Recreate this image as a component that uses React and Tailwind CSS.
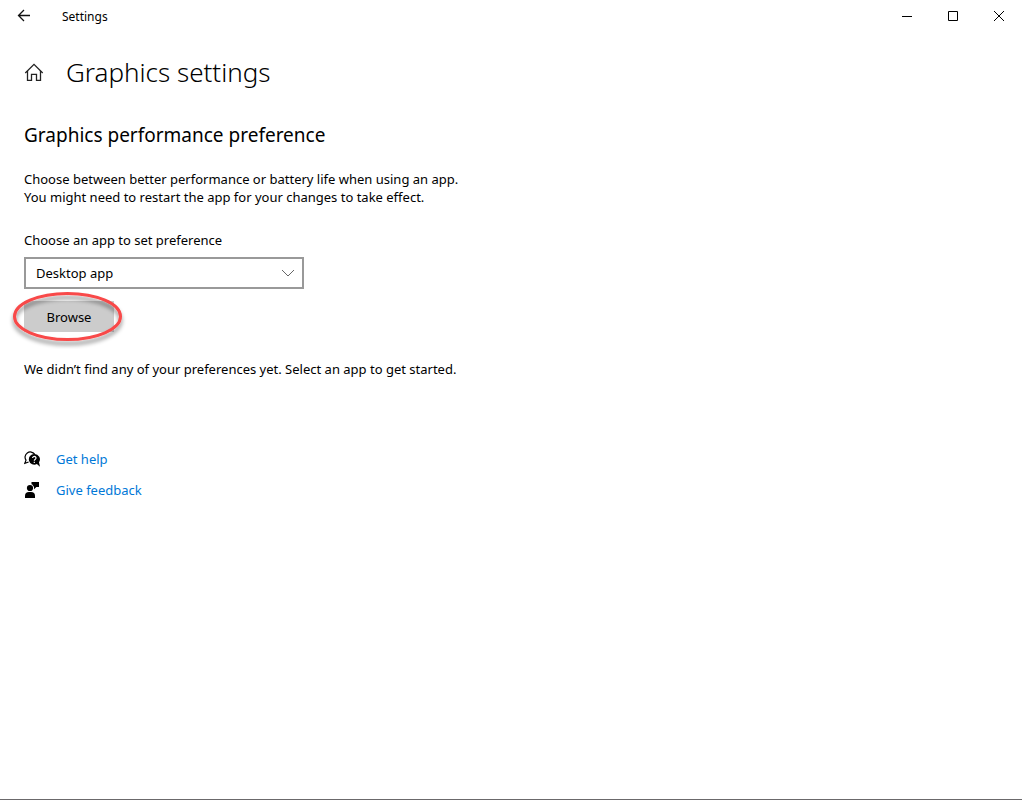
import React from 'react';

const BackIcon = () => (
  <svg className="w-4 h-4" viewBox="0 0 16 16" fill="none" stroke="#111" strokeWidth="1.3">
    <path d="M14 7.5H2.5M8 2L2.5 7.5L8 13" />
  </svg>
);

const HomeIcon = () => (
  <svg className="w-5 h-5 shrink-0" viewBox="0 0 20 20" fill="none" stroke="#222" strokeWidth="1.3">
    <path d="M1.3 11L10 2.3L18.7 11" />
    <path d="M3.5 9V18.4H7.5V12.4H12.5V18.4H16.5V9" />
  </svg>
);

const HelpIcon = () => (
  <svg className="w-4 h-4 shrink-0" viewBox="0 0 16 16" fill="none">
    <path
      d="M4.6 11L.8 12.4L2 9.2A4.9 4.9 0 1 1 10.6 3.2"
      stroke="#000"
      strokeWidth="1.2"
    />
    <path d="M10.3 2.9a5.4 5.4 0 1 0 2.6 10.1l3.1 2.7l-1-4.4a5.4 5.4 0 0 0-4.7-8.4z" fill="#000" />
    <path d="M8.6 7a1.7 1.5 0 1 1 2.7 1.2c-.7.5-1 .7-1 1.5" stroke="#fff" strokeWidth="1.2" />
    <path d="M9.7 10.7h1.2v1.2H9.7z" fill="#fff" />
  </svg>
);

const FeedbackIcon = () => (
  <svg className="w-4 h-4 shrink-0" viewBox="0 0 16 16" fill="#000">
    <circle cx="6" cy="6" r="3.1" />
    <path d="M1 16v-2a4 4 0 0 1 4-4h2a4 4 0 0 1 4 4v2z" />
    <path d="M7.5 0H15v5h-2.6L10 7.3V5L8.3 2.6L7.5 2.2z" />
  </svg>
);

const TitleBar = () => (
  <header className="flex h-8 items-center justify-between">
    <div className="flex items-center">
      <button aria-label="Back" className="flex h-8 w-12 items-center justify-center">
        <BackIcon />
      </button>
      <span className="ml-3.5 pt-px text-[12px] leading-4">Settings</span>
    </div>
    <div className="flex">
      <button aria-label="Minimize" className="flex h-8 w-[46px] items-center justify-center">
        <svg className="w-2.5 h-2.5" viewBox="0 0 10 10" fill="none" stroke="#000">
          <path d="M0 5.5H10" />
        </svg>
      </button>
      <button aria-label="Maximize" className="flex h-8 w-[46px] items-center justify-center">
        <svg className="w-2.5 h-2.5" viewBox="0 0 10 10" fill="none" stroke="#000">
          <path d="M.5 .5H9.5V9.5H.5z" />
        </svg>
      </button>
      <button aria-label="Close" className="flex h-8 w-[46px] items-center justify-center">
        <svg className="w-2.5 h-2.5" viewBox="0 0 10 10" fill="none" stroke="#000">
          <path d="M0 0L10 10M10 0L0 10" />
        </svg>
      </button>
    </div>
  </header>
);

const AppPicker = () => (
  <div>
    <label htmlFor="app-type" className="block text-[13px] leading-[18px]">
      Choose an app to set preference
    </label>
    <div className="relative mt-2 w-[280px]">
      <select
        id="app-type"
        className="block h-8 w-full appearance-none border-2 border-[#999] bg-white pl-2.5 pr-8 pt-0.5 text-[13px]"
      >
        <option>Desktop app</option>
        <option>Microsoft Store app</option>
      </select>
      <svg
        className="pointer-events-none absolute right-2.5 top-2.5 h-3 w-3"
        viewBox="0 0 12 12"
        fill="none"
        stroke="#666"
      >
        <path d="M0 3L6 9L12 3" />
      </svg>
    </div>
    <div className="relative mt-3 w-[90px]">
      <button className="block h-[31px] w-full bg-[#ccc] pt-0.5 text-[13px]">Browse</button>
      {/* Highlight ring around the button */}
      <svg
        className="pointer-events-none absolute -left-4 -top-4 h-16 w-[120px]"
        viewBox="0 0 120 64"
        fill="none"
      >
        <defs>
          <filter id="ring-shadow" x="-20%" y="-20%" width="140%" height="160%">
            <feDropShadow dx="0" dy="4" stdDeviation="2" floodColor="#000" floodOpacity="0.45" />
          </filter>
        </defs>
        <ellipse
          cx="59.5"
          cy="31.5"
          rx="53"
          ry="23"
          stroke="#f84848"
          strokeWidth="3"
          filter="url(#ring-shadow)"
        />
      </svg>
    </div>
  </div>
);

const App = () => {
  return (
    <div className="flex min-h-screen flex-col border-b border-[#6b696b] bg-white font-['Noto_Sans','Open_Sans',sans-serif] text-black">
      <TitleBar />
      <main className="flex-1 px-6 pt-5">
        <div className="flex items-center gap-[22px]">
          <button aria-label="Home">
            <HomeIcon />
          </button>
          <h1 className="text-[26px] font-light leading-10">Graphics settings</h1>
        </div>

        <h2 className="mt-[29px] text-[19px] leading-7">Graphics performance preference</h2>
        <p className="mt-[21px] mb-[25px] text-[13px] leading-[18px]">
          Choose between better performance or battery life when using an app.
          <br />
          You might need to restart the app for your changes to take effect.
        </p>

        <AppPicker />

        <p className="mt-7 text-[13px] leading-[18px]">
          We didn’t find any of your preferences yet. Select an app to get started.
        </p>

        <ul className="mt-[72px] space-y-[13px] text-[13px] leading-[18px] text-[#0078d7]">
          <li className="flex items-center gap-4">
            <HelpIcon />
            <a href="#help">Get help</a>
          </li>
          <li className="flex items-center gap-4">
            <FeedbackIcon />
            <a href="#feedback">Give feedback</a>
          </li>
        </ul>
      </main>
    </div>
  );
};

export default App;
